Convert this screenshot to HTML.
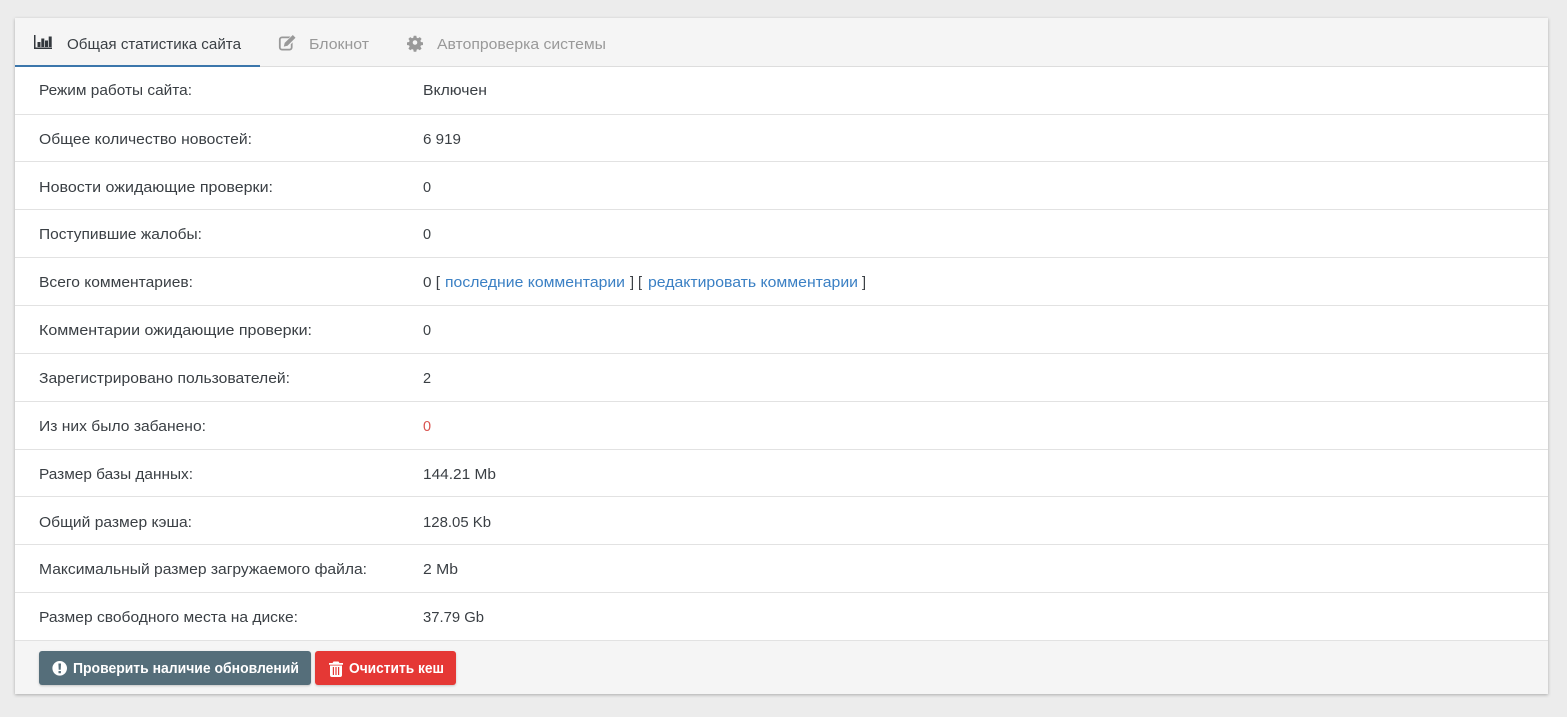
<!DOCTYPE html>
<html lang="ru"><head><meta charset="utf-8"><title>Статистика</title>
<style>
html,body{margin:0;padding:0;background:#ececec;width:1567px;height:717px;overflow:hidden}
svg{display:block}
text{font-family:"Liberation Sans",Arial,sans-serif;font-size:14.5px;fill:#3a3f44}
.m{fill:#999}.a{fill:#3b80c4}.r{fill:#d9534f}
.b{fill:#fff;font-weight:bold;font-size:14.5px}
</style></head><body>
<svg width="1567" height="717" viewBox="0 0 1567 717" xmlns="http://www.w3.org/2000/svg">
<defs><filter id="s" x="-2%" y="-2%" width="104%" height="104%"><feDropShadow dx="0" dy="1" stdDeviation="1.5" flood-color="#000" flood-opacity=".28"/></filter>
<filter id="bs" x="-5%" y="-10%" width="110%" height="125%"><feDropShadow dx="0" dy="1" stdDeviation="1" flood-color="#000" flood-opacity=".2"/></filter></defs>
<rect x="15" y="18" width="1533" height="676" fill="#fff" filter="url(#s)"/>
<rect x="15" y="18" width="1533" height="48" fill="#f5f5f5"/>
<rect x="15" y="66" width="1533" height="1" fill="#ddd"/>
<rect x="15" y="65" width="245" height="2" fill="#3b76ab"/>
<rect x="15" y="641" width="1533" height="53" fill="#f5f5f5"/>
<g fill="#e2e2e2">
<rect x="15" y="114" width="1533" height="1"/><rect x="15" y="161" width="1533" height="1"/><rect x="15" y="209" width="1533" height="1"/><rect x="15" y="257" width="1533" height="1"/><rect x="15" y="305" width="1533" height="1"/><rect x="15" y="353" width="1533" height="1"/><rect x="15" y="401" width="1533" height="1"/><rect x="15" y="449" width="1533" height="1"/><rect x="15" y="496" width="1533" height="1"/><rect x="15" y="544" width="1533" height="1"/><rect x="15" y="592" width="1533" height="1"/><rect x="15" y="640" width="1533" height="1"/>
</g>

<!-- tab icons -->
<g fill="#33383d"><path d="M34 35h1.500v12.500H52V49H34z"/><rect x="37.500" y="42" width="3" height="5"/><rect x="41.300" y="38.500" width="3" height="8.500"/><rect x="45" y="40.500" width="3" height="6.500"/><rect x="48.700" y="36.500" width="3" height="10.500"/></g>
<g fill="#999"><path d="M282 36.500h8.500l-1.800 1.800H282a1.300 1.300 0 0 0-1.300 1.300v7.800a1.300 1.300 0 0 0 1.300 1.300h7.500a1.300 1.300 0 0 0 1.300-1.300v-3.200l1.800-1.800V47.400a3.100 3.100 0 0 1-3.100 3.100H282a3.100 3.100 0 0 1-3.100-3.100v-7.800a3.100 3.100 0 0 1 3.100-3.100z"/><path d="M292.800 35l2.700 2.700-8 8-3.700.9.900-3.700z"/></g>
<path fill="#999" fill-rule="evenodd" d="M413.700 36h2.600l.4 2.100 1.300.5 1.800-1.200 1.800 1.800-1.200 1.800.5 1.300 2.100.4v2.600l-2.100.4-.5 1.300 1.200 1.800-1.800 1.800-1.800-1.200-1.300.5-.4 2.100h-2.600l-.4-2.100-1.300-.5-1.800 1.200-1.800-1.800 1.200-1.800-.5-1.300-2.100-.4v-2.600l2.100-.4.5-1.300-1.200-1.800 1.800-1.800 1.800 1.200 1.300-.5zM415 40.500a2.300 2.300 0 1 0 0 4.600 2.300 2.300 0 0 0 0-4.600z" transform="translate(0 -.3)"/>

<g>
<text x="67" y="49" textLength="174" lengthAdjust="spacingAndGlyphs">Общая статистика сайта</text>
<text class="m" x="309" y="49" textLength="60" lengthAdjust="spacingAndGlyphs">Блокнот</text>
<text class="m" x="437" y="49" textLength="169" lengthAdjust="spacingAndGlyphs">Автопроверка системы</text>

<text x="39" y="95" textLength="153" lengthAdjust="spacingAndGlyphs">Режим работы сайта:</text>
<text x="39" y="144" textLength="213" lengthAdjust="spacingAndGlyphs">Общее количество новостей:</text>
<text x="39" y="192" textLength="234" lengthAdjust="spacingAndGlyphs">Новости ожидающие проверки:</text>
<text x="39" y="239" textLength="163" lengthAdjust="spacingAndGlyphs">Поступившие жалобы:</text>
<text x="39" y="287" textLength="154" lengthAdjust="spacingAndGlyphs">Всего комментариев:</text>
<text x="39" y="335" textLength="273" lengthAdjust="spacingAndGlyphs">Комментарии ожидающие проверки:</text>
<text x="39" y="383" textLength="251" lengthAdjust="spacingAndGlyphs">Зарегистрировано пользователей:</text>
<text x="39" y="431" textLength="167" lengthAdjust="spacingAndGlyphs">Из них было забанено:</text>
<text x="39" y="479" textLength="154" lengthAdjust="spacingAndGlyphs">Размер базы данных:</text>
<text x="39" y="527" textLength="153" lengthAdjust="spacingAndGlyphs">Общий размер кэша:</text>
<text x="39" y="574" textLength="328" lengthAdjust="spacingAndGlyphs">Максимальный размер загружаемого файла:</text>
<text x="39" y="622" textLength="259" lengthAdjust="spacingAndGlyphs">Размер свободного места на диске:</text>

<text x="423" y="95" textLength="64" lengthAdjust="spacingAndGlyphs">Включен</text>
<text x="423" y="144" textLength="38" lengthAdjust="spacingAndGlyphs">6 919</text>
<text x="423" y="192">0</text>
<text x="423" y="239">0</text>
<text x="423" y="287" textLength="17" lengthAdjust="spacingAndGlyphs">0 [</text>
<text class="a" x="445" y="287" textLength="180" lengthAdjust="spacingAndGlyphs">последние комментарии</text>
<text x="630" y="287">]</text>
<text x="638" y="287">[</text>
<text class="a" x="648" y="287" textLength="210" lengthAdjust="spacingAndGlyphs">редактировать комментарии</text>
<text x="862" y="287">]</text>
<text x="423" y="335">0</text>
<text x="423" y="383">2</text>
<text class="r" x="423" y="431">0</text>
<text x="423" y="479" textLength="73" lengthAdjust="spacingAndGlyphs">144.21 Mb</text>
<text x="423" y="527" textLength="68" lengthAdjust="spacingAndGlyphs">128.05 Kb</text>
<text x="423" y="574" textLength="35" lengthAdjust="spacingAndGlyphs">2 Mb</text>
<text x="423" y="622" textLength="61" lengthAdjust="spacingAndGlyphs">37.79 Gb</text>
</g>

<rect x="39" y="651" width="272" height="34" rx="3" fill="#546e7a" filter="url(#bs)"/>
<rect x="315" y="651" width="141" height="34" rx="3" fill="#e53935" filter="url(#bs)"/>
<path fill="#fff" fill-rule="evenodd" d="M59.700 661a7.300 7.300 0 1 1 0 14.600 7.300 7.300 0 0 1 0-14.600zM58.400 663.500l.3 6.200h2l.3-6.200zM58.500 671v2.200h2.400V671z"/>
<path fill="#fff" fill-rule="evenodd" d="M333.500 661.500h5l1 1.500h3.500v1.700h-14V663h3.500zM330 665.500h12v9.500a2 2 0 0 1-2 2h-8a2 2 0 0 1-2-2zM332.800 667v8h1.200v-8zM335.400 667v8h1.200v-8zM338 667v8h1.200v-8z"/>
<text class="b" x="73" y="673" textLength="226" lengthAdjust="spacingAndGlyphs">Проверить наличие обновлений</text>
<text class="b" x="349" y="673" textLength="95" lengthAdjust="spacingAndGlyphs">Очистить кеш</text>
</svg>
</body></html>
